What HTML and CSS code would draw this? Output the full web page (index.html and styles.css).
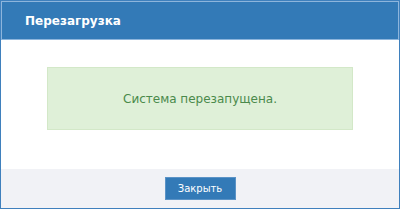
FILE: index.html
```html
<!DOCTYPE html>
<html lang="ru">
<head>
<meta charset="utf-8">
<title>Перезагрузка</title>
<link rel="stylesheet" href="styles.css">
</head>
<body>
<div class="dialog">
  <div class="dialog-header">
    <h1 class="dialog-title">Перезагрузка</h1>
  </div>
  <div class="dialog-body">
    <div class="alert-success">Система перезапущена.</div>
  </div>
  <div class="dialog-footer">
    <button class="btn-primary" type="button">Закрыть</button>
  </div>
</div>
</body>
</html>
```
FILE: styles.css
```css
html, body {
  margin: 0;
  padding: 0;
  background: #ffffff;
}
.dialog {
  width: 400px;
  height: 209px;
  box-sizing: border-box;
  border: 1px solid #3f80bd;
  display: flex;
  flex-direction: column;
  font-family: "DejaVu Sans", Verdana, sans-serif;
}
.dialog-header {
  height: 39px;
  box-sizing: border-box;
  background: #337ab7;
  border: 1px solid #8db5dc;
  display: flex;
  align-items: center;
  padding-left: 23px;
  padding-top: 1px;
}
.dialog-title {
  margin: 0;
  font-size: 12px;
  font-weight: bold;
  color: #ffffff;
  letter-spacing: 0;
}
.dialog-body {
  flex: 1;
  padding: 27px 46px 0;
  background: #ffffff;
}
.alert-success {
  height: 63px;
  box-sizing: border-box;
  background: #dff0d8;
  border: 1px solid #d3e8c8;
  color: #4a8a4b;
  font-size: 12px;
  display: flex;
  align-items: center;
  justify-content: center;
}
.dialog-footer {
  height: 39px;
  box-sizing: border-box;
  background: #f1f2f6;
  display: flex;
  justify-content: center;
  padding-top: 8px;
}
.btn-primary {
  width: 71px;
  height: 23px;
  box-sizing: border-box;
  background: #337ab7;
  border: 1px solid #5b93c6;
  color: #ffffff;
  font-family: "DejaVu Sans", Verdana, sans-serif;
  font-size: 10px;
  padding: 0;
  cursor: pointer;
}
```
